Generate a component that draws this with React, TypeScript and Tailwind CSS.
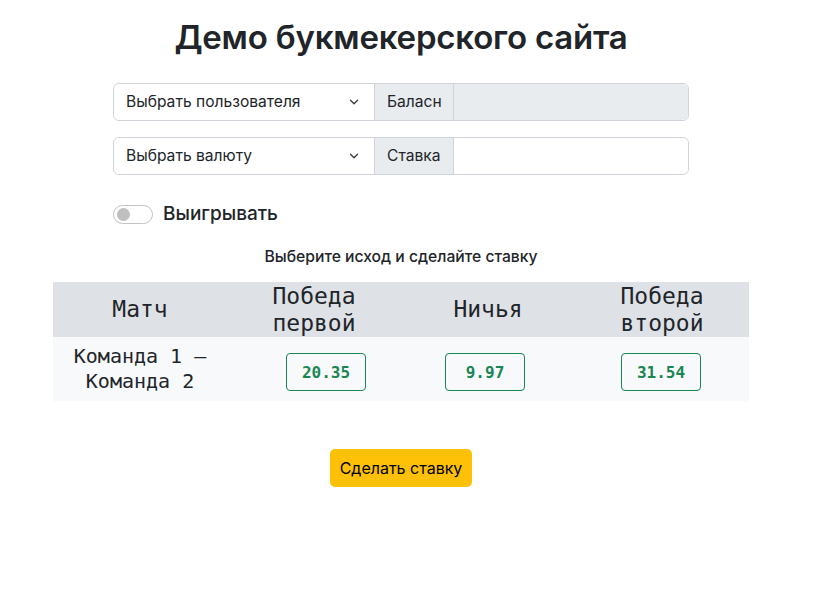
import { ChevronDown } from "lucide-react";

const sans = "font-['Inter','Liberation_Sans','Noto_Sans',sans-serif]";
const mono = "font-['DejaVu_Sans_Mono','Liberation_Mono',monospace]";

const odds = [
  { value: "20.35", shift: "ml-[24px]" },
  { value: "9.97", shift: "mr-[6px]" },
  { value: "31.54", shift: "mr-[2px]" },
];

function SelectGroup({ placeholder, label, disabled }: { placeholder: string; label: string; disabled?: boolean }) {
  return (
    <div className="flex h-[38px] w-[576px] rounded-[6px] border border-[#ced4da] text-[15.6px] text-[#212529]">
      <div className="flex w-[261px] items-center justify-between rounded-l-[6px] border-r border-[#ced4da] bg-white pl-3 pr-[13px]">
        <span>{placeholder}</span>
        <ChevronDown size={14} strokeWidth={2.2} className="text-[#343a40]" />
      </div>
      <div className="flex w-[79px] items-center border-r border-[#ced4da] bg-[#e9ecef] px-3">{label}</div>
      <div className={`flex-1 rounded-r-[6px] ${disabled ? "bg-[#e9ecef]" : "bg-white"}`} />
    </div>
  );
}

export default function App() {
  return (
    <div className={`min-h-screen bg-white ${sans} text-[#212529]`}>
      <div className="flex w-[802px] flex-col items-center">
        <h1 className="mt-[17px] text-[33px] font-semibold leading-[40px] tracking-[-0.2px]">Демо букмекерского сайта</h1>

        <div className="mt-[26px] flex flex-col gap-4">
          <SelectGroup placeholder="Выбрать пользователя" label="Баласн" disabled />
          <SelectGroup placeholder="Выбрать валюту" label="Ставка" />

          <label className="mt-[9px] flex items-center gap-[10px]">
            <span className="flex h-[19px] w-[40px] items-center rounded-full border border-[#bfc4c9] bg-white px-[3px]">
              <span className="h-[13px] w-[13px] rounded-full bg-[#bfbfbf]" />
            </span>
            <span className="text-[19px] font-medium">Выигрывать</span>
          </label>
        </div>

        <p className="mt-[16px] text-[15.7px] font-medium">Выберите исход и сделайте ставку</p>

        <table className={`mt-[14px] w-[696px] table-fixed ${mono}`}>
          <thead>
            <tr className="h-[55px] bg-[#dee2e6] text-[23px] leading-[27px] text-[#212529]">
              <th className="font-normal">Матч</th>
              <th className="font-normal">
                Победа
                <br />
                первой
              </th>
              <th className="font-normal">Ничья</th>
              <th className="font-normal">
                Победа
                <br />
                второй
              </th>
            </tr>
          </thead>
          <tbody>
            <tr className="h-[64px] bg-[#f8f9fa] text-[20px] leading-[25px]">
              <td className="text-center">
                Команда 1 –
                <br />
                Команда 2
              </td>
              {odds.map((o) => (
                <td key={o.value} className="pt-[6px] text-center">
                  <button
                    className={`h-[38px] w-[80px] rounded-[4px] border border-[#198754] text-[16px] font-bold text-[#198754] ${o.shift}`}
                  >
                    {o.value}
                  </button>
                </td>
              ))}
            </tr>
          </tbody>
        </table>

        <button className="mt-[48px] h-[38px] w-[142px] rounded-[5px] bg-[#ffc107] text-[16px] text-black">
          Сделать ставку
        </button>
      </div>
    </div>
  );
}
